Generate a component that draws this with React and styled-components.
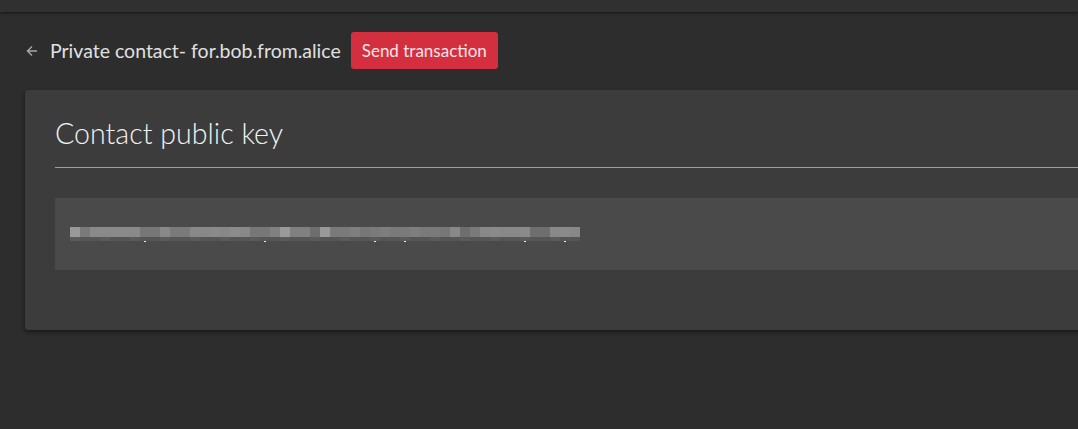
import styled, { createGlobalStyle } from 'styled-components';

const GlobalStyle = createGlobalStyle`
  html, body {
    margin: 0;
    padding: 0;
    background: #2d2d2d;
    overflow: hidden;
  }
  body {
    font-family: Lato, "Open Sans", sans-serif;
    color: #e2e2e2;
  }
`;

// shades of the redacted (pixelated) key, one per 10px block
const topShades = [
  '#999', '#7a7a7a', '#8a8a8a', '#8a8a8a', '#8a8a8a', '#8a8a8a', '#8a8a8a',
  '#777', '#777', '#888', '#7a7a7a', '#7a7a7a', '#888', '#888', '#8a8a8a',
  '#888', '#8c8c8c', '#888', '#777', '#777', '#808080', '#9a9a9a', '#808080',
  '#808080', '#6e6e6e', '#999', '#7a7a7a', '#7a7a7a', '#7e7e7e', '#777',
  '#7a7a7a', '#7e7e7e', '#7a7a7a', '#7a7a7a', '#7e7e7e', '#7a7a7a', '#7a7a7a',
  '#777', '#888', '#6e6e6e', '#7a7a7a', '#888', '#8a8a8a', '#888', '#888',
  '#8a8a8a', '#6e6e6e', '#6e6e6e', '#888', '#8a8a8a', '#888',
];
const bottomShades = topShades.map((s, i) => (i % 3 === 0 ? '#5a5a5a' : '#555'));
const dots = [7, 19, 30, 33, 45, 49];

const Page = styled.div`
  min-height: 429px;
`;

const TopBar = styled.div`
  height: 12px;
  background: #303030;
  box-shadow: 0 1px 3px rgba(0, 0, 0, 0.55);
`;

const Content = styled.div`
  padding: 20px 0 0 25px;
`;

const Header = styled.div`
  display: flex;
  align-items: center;
  height: 37px;
  margin-bottom: 21px;
`;

const BackButton = styled.button`
  display: flex;
  align-items: center;
  justify-content: center;
  width: 14px;
  height: 14px;
  margin: 0 11px 0 0;
  padding: 0;
  border: none;
  background: none;
  color: #a8a8a8;
  cursor: pointer;
`;

const Title = styled.h1`
  margin: 0 10px 0 0;
  font-size: 19.5px;
  font-weight: 400;
  color: #e0e0e0;
  white-space: nowrap;
`;

const SendButton = styled.button`
  height: 37px;
  padding: 0 11px 1px;
  border: none;
  border-radius: 3px;
  background: #d32f3f;
  color: #f7e6e8;
  font-family: Lato, sans-serif;
  font-size: 17px;
  cursor: pointer;
`;

const Card = styled.section`
  width: 1100px;
  height: 240px;
  box-sizing: border-box;
  padding: 22px 30px 0;
  background: #3c3c3c;
  border-radius: 3px;
  box-shadow: 0 2px 4px rgba(0, 0, 0, 0.5);
`;

const CardTitle = styled.h2`
  margin: 0;
  padding-bottom: 13px;
  font-size: 28.6px;
  font-weight: 300;
  line-height: 42px;
  color: #f2f2f2;
  border-bottom: 1px solid #9aa09e;
`;

const KeyBox = styled.div`
  margin-top: 30px;
  height: 72px;
  box-sizing: border-box;
  padding: 29px 15px 0;
  background: #4a4a4a;
`;

const Redacted = () => (
  <svg width={topShades.length * 10} height="16" aria-hidden="true">
    {topShades.map((c, i) => (
      <rect key={`t${i}`} x={i * 10} y="0" width="10" height="10" fill={c} />
    ))}
    {bottomShades.map((c, i) => (
      <rect key={`b${i}`} x={i * 10} y="10" width="10" height="4" fill={c} />
    ))}
    {dots.map((d) => (
      <rect key={`d${d}`} x={d * 10 + 4} y="14" width="2" height="1" fill="#eee" />
    ))}
  </svg>
);

const ArrowLeft = () => (
  <svg width="12" height="12" viewBox="0 0 12 12" fill="none" stroke="currentColor" strokeWidth="1.4">
    <path d="M11 6H1.5M6 1.5L1.5 6 6 10.5" />
  </svg>
);

export default function App() {
  return (
    <Page>
      <GlobalStyle />
      <TopBar />
      <Content>
        <Header>
          <BackButton aria-label="Back">
            <ArrowLeft />
          </BackButton>
          <Title>Private contact- for.bob.from.alice</Title>
          <SendButton>Send transaction</SendButton>
        </Header>
        <Card>
          <CardTitle>Contact public key</CardTitle>
          <KeyBox>
            <Redacted />
          </KeyBox>
        </Card>
      </Content>
    </Page>
  );
}
